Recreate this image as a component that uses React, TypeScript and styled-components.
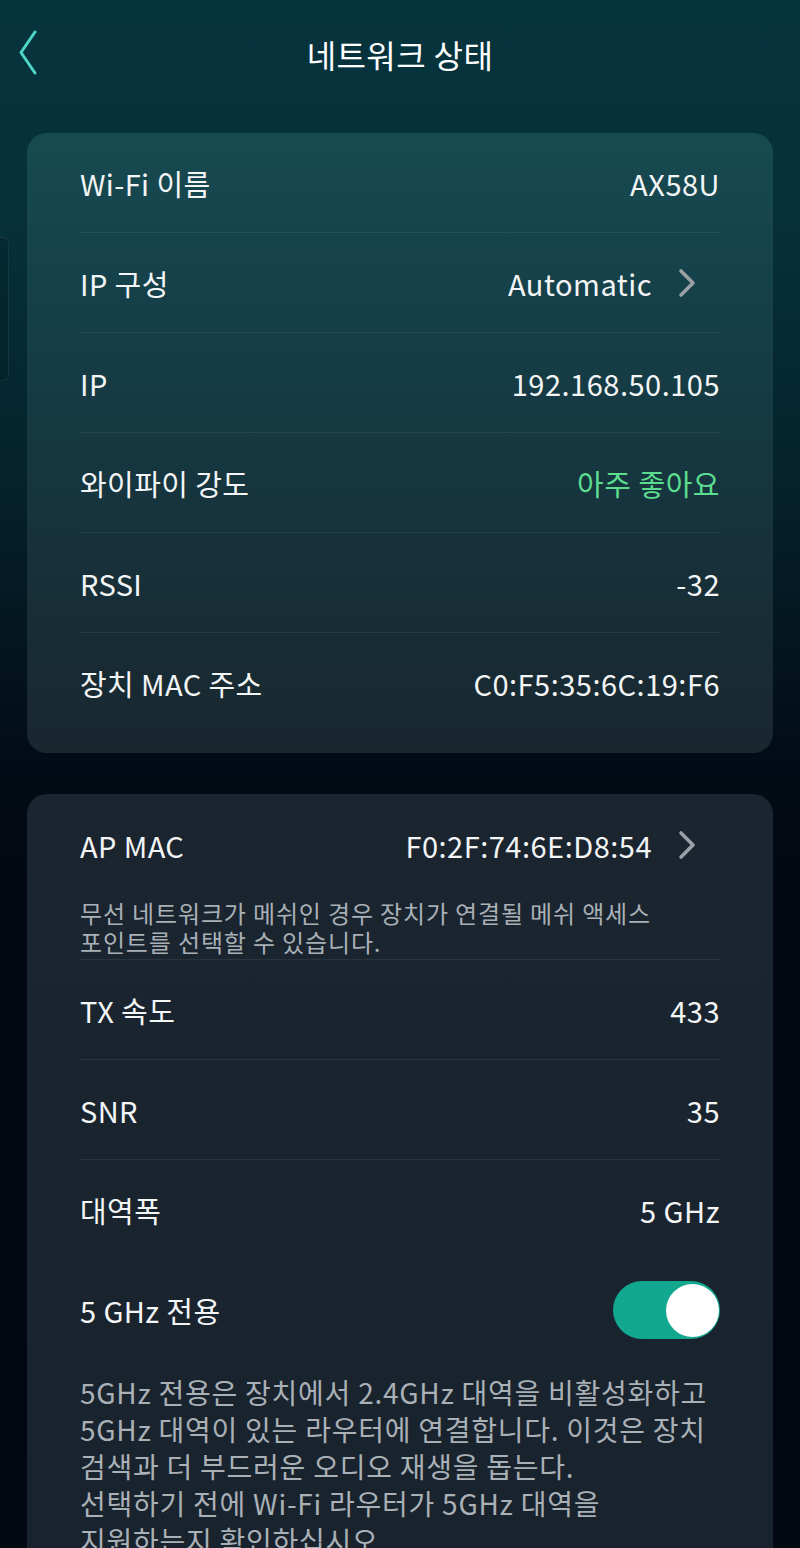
import React from "react";
import styled, { createGlobalStyle } from "styled-components";

const Global = createGlobalStyle`
  html, body { margin: 0; padding: 0; }
  body {
    background: #030812;
    font-family: "Noto Sans CJK KR", "Noto Sans", sans-serif;
    color: #f3f5f6;
  }
`;

const Screen = styled.div`
  position: relative;
  width: 800px;
  height: 1548px;
  overflow: hidden;
  background: linear-gradient(
    180deg,
    #06343d 0px,
    #062f39 250px,
    #051f29 520px,
    #030c16 760px,
    #030812 900px,
    #030812 100%
  );
`;

const EdgeTab = styled.div`
  position: absolute;
  left: -6px;
  top: 237px;
  width: 13px;
  height: 142px;
  border: 1px solid rgba(255, 255, 255, 0.07);
  border-radius: 6px;
  background: rgba(0, 0, 0, 0.12);
`;

const Header = styled.header`
  height: 108px;
  display: grid;
  grid-template-columns: 80px 1fr 80px;
  align-items: center;
`;

const BackButton = styled.div`
  display: flex;
  align-items: center;
  padding-left: 18px;
  margin-top: -2px;
`;

const Title = styled.h1`
  margin: 0;
  text-align: center;
  font-size: 32px;
  font-weight: 400;
  color: #ffffff;
  letter-spacing: 0.4px;
`;

const Card = styled.section<{ $tone: "teal" | "dark"; $top: number }>`
  margin: ${(p) => p.$top}px 27px 0;
  border-radius: 20px;
  padding: 0 53px 20px;
  background: ${(p) =>
    p.$tone === "teal"
      ? "linear-gradient(180deg, #174a51 0%, #153f48 30%, #173039 70%, #19272f 100%)"
      : "linear-gradient(180deg, #1a2530 0%, #19232e 100%)"};
`;

const Row = styled.div<{ $h?: number; $line?: boolean }>`
  height: ${(p) => p.$h ?? 99}px;
  display: flex;
  align-items: center;
  justify-content: space-between;
  border-bottom: ${(p) => (p.$line === false ? "none" : "1px solid rgba(255,255,255,0.07)")};
`;

const Label = styled.span`
  font-size: 29px;
  color: #f3f5f6;
  white-space: nowrap;
  letter-spacing: 0.4px;
`;

const Value = styled.span<{ $green?: boolean }>`
  display: flex;
  align-items: center;
  gap: 26px;
  font-size: 29px;
  color: ${(p) => (p.$green ? "#5bdc8f" : "#f3f5f6")};
  white-space: nowrap;
  letter-spacing: 0.5px;
`;

const LinkValue = styled(Value)`
  margin-right: 24px;
`;

const Desc = styled.div<{ $size: number; $lh: number; $pt: number; $pb: number; $ls: number; $line?: boolean }>`
  font-size: ${(p) => p.$size}px;
  line-height: ${(p) => p.$lh}px;
  color: #a9b0b6;
  padding: ${(p) => p.$pt}px 0 ${(p) => p.$pb}px;
  border-bottom: ${(p) => (p.$line ? "1px solid rgba(255,255,255,0.07)" : "none")};
  letter-spacing: ${(p) => p.$ls}px;
`;

const DescLine = styled.span`
  display: block;
  white-space: nowrap;
`;

const Toggle = styled.div<{ $on: boolean }>`
  width: 107px;
  height: 58px;
  border-radius: 29px;
  background: ${(p) => (p.$on ? "#12a78f" : "#4a525a")};
  display: flex;
  align-items: center;
  justify-content: ${(p) => (p.$on ? "flex-end" : "flex-start")};
  padding: 0 1px;
  box-sizing: border-box;
`;

const Knob = styled.div`
  width: 53px;
  height: 53px;
  border-radius: 50%;
  background: #ffffff;
`;

const Chevron = () => (
  <svg width="18" height="30" viewBox="0 0 18 30" fill="none">
    <path d="M3 3 L15 15 L3 27" stroke="#9aa0a5" strokeWidth="3.6" strokeLinecap="round" strokeLinejoin="round" />
  </svg>
);

const BackChevron = () => (
  <svg width="22" height="46" viewBox="0 0 22 46" fill="none">
    <path d="M17 2 L3 22.5 L17 43" stroke="#4fd5c8" strokeWidth="3" strokeLinecap="round" strokeLinejoin="round" />
  </svg>
);

export default function App() {
  return (
    <>
      <Global />
      <Screen>
        <EdgeTab />
        <Header>
          <BackButton>
            <BackChevron />
          </BackButton>
          <Title>네트워크 상태</Title>
          <div />
        </Header>

        <Card $tone="teal" $top={25}>
          <Row $h={99}>
            <Label>Wi-Fi 이름</Label>
            <Value>AX58U</Value>
          </Row>
          <Row>
            <Label>IP 구성</Label>
            <LinkValue>
              Automatic
              <Chevron />
            </LinkValue>
          </Row>
          <Row>
            <Label>IP</Label>
            <Value>192.168.50.105</Value>
          </Row>
          <Row>
            <Label>와이파이 강도</Label>
            <Value $green>아주 좋아요</Value>
          </Row>
          <Row>
            <Label>RSSI</Label>
            <Value>-32</Value>
          </Row>
          <Row $h={100} $line={false}>
            <Label>장치 MAC 주소</Label>
            <Value>C0:F5:35:6C:19:F6</Value>
          </Row>
        </Card>

        <Card $tone="dark" $top={41}>
          <Row $h={102} $line={false}>
            <Label>AP MAC</Label>
            <LinkValue>
              F0:2F:74:6E:D8:54
              <Chevron />
            </LinkValue>
          </Row>
          <Desc $size={24} $lh={29} $pt={2} $pb={3} $ls={0.85} $line>
            <DescLine>무선 네트워크가 메쉬인 경우 장치가 연결될 메쉬 액세스</DescLine>
            <DescLine>포인트를 선택할 수 있습니다.</DescLine>
          </Desc>
          <Row>
            <Label>TX 속도</Label>
            <Value>433</Value>
          </Row>
          <Row>
            <Label>SNR</Label>
            <Value>35</Value>
          </Row>
          <Row $h={100} $line={false}>
            <Label>대역폭</Label>
            <Value>5 GHz</Value>
          </Row>
          <Row $h={100} $line={false}>
            <Label>5 GHz 전용</Label>
            <Toggle $on>
              <Knob />
            </Toggle>
          </Row>
          <Desc $size={28} $lh={37} $pt={14} $pb={0} $ls={0.75}>
            <DescLine>5GHz 전용은 장치에서 2.4GHz 대역을 비활성화하고</DescLine>
            <DescLine>5GHz 대역이 있는 라우터에 연결합니다. 이것은 장치</DescLine>
            <DescLine>검색과 더 부드러운 오디오 재생을 돕는다.</DescLine>
            <DescLine>선택하기 전에 Wi-Fi 라우터가 5GHz 대역을</DescLine>
            <DescLine>지원하는지 확인하십시오.</DescLine>
          </Desc>
        </Card>
      </Screen>
    </>
  );
}
